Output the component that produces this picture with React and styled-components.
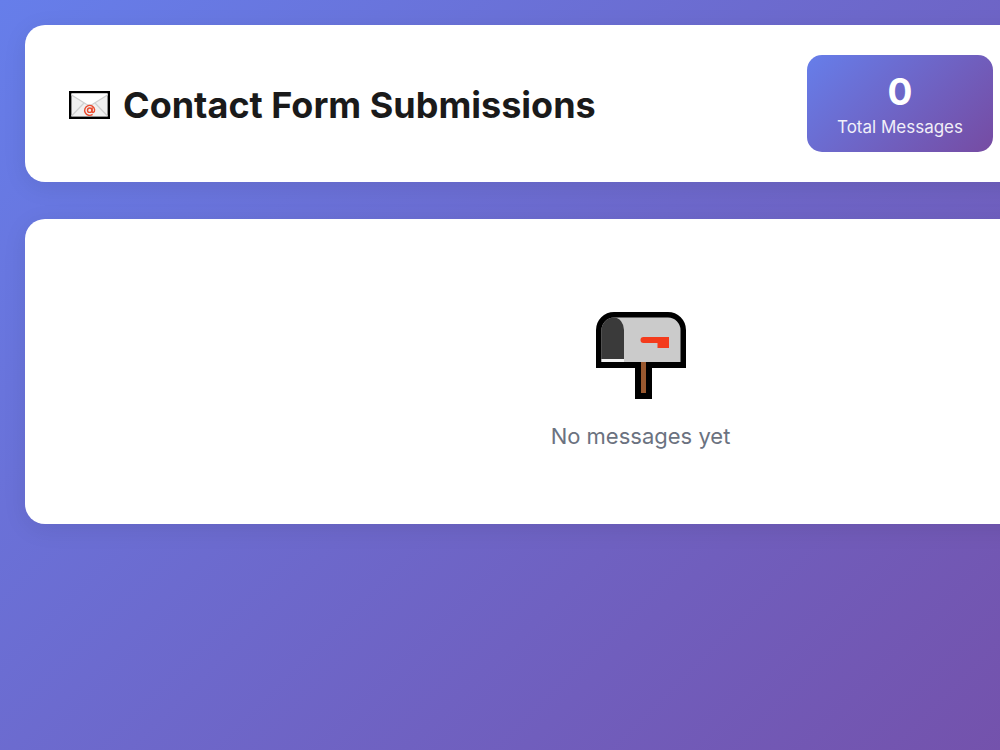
import React from 'react'
import styled, { createGlobalStyle } from 'styled-components';

function App() {
    return (
        <>
            <GlobalStyle />
            <Page>
                <Header>
                    <Title>
                        <EnvelopeIcon />
                        <span>Contact Form Submissions</span>
                    </Title>
                    <Stat>
                        <StatNumber>0</StatNumber>
                        <StatLabel>Total Messages</StatLabel>
                    </Stat>
                </Header>
                <EmptyState>
                    <MailboxIcon />
                    <p>No messages yet</p>
                </EmptyState>
            </Page>
        </>
    )
}

function EnvelopeIcon() {
    return (
        <svg width='41' height='28' viewBox='0 0 41 28' aria-hidden='true'>
            <rect x='1.2' y='1.2' width='38.6' height='25.6' fill='#f0f0f0' stroke='#000' strokeWidth='2.4' />
            <path d='M2.5 2.5H38.5V4L24 13Q20.5 15 17 13L2.5 4Z' fill='#fff' />
            <path d='M2.5 4L17 13Q20.5 15 24 13L38.5 4M2.5 25L15 12M38.5 25L26 12' fill='none' stroke='#cfcfcf' strokeWidth='1.2' />
            <circle cx='20.7' cy='19.2' r='2.2' fill='none' stroke='#ea4a2d' strokeWidth='1.4' />
            <path d='M23.1 16.6V20.2Q23.2 21.6 24.4 21.4Q25.8 20.8 25.6 18.6A5 5 0 1 0 23.6 23.4' fill='none' stroke='#ea4a2d' strokeWidth='1.4' />
        </svg>
    )
}

function MailboxIcon() {
    return (
        <svg width='90' height='87' viewBox='0 0 90 87' aria-hidden='true'>
            <path d='M0 56V18A18 18 0 0 1 18 0H72A18 18 0 0 1 90 18V56H56V87H39V56Z' fill='#000' />
            <path d='M5.5 50V18A12.5 12.5 0 0 1 18 5.5H72A12.5 12.5 0 0 1 84.5 18V50Z' fill='#cbcbcb' />
            <path d='M5.5 47H28V50H5.5Z' fill='#f4f4f4' />
            <path d='M5.5 47V18A12.5 12.5 0 0 1 18 5.5A10 12.5 0 0 1 28 18V47Z' fill='#3a3a3a' />
            <path d='M47.5 25H73V36H61.5V31H47.5A3 3 0 0 1 47.5 25Z' fill='#f43b1c' />
            <path d='M45 50H50V81H45Z' fill='#99582f' />
        </svg>
    )
}

export default App


const GlobalStyle = createGlobalStyle`
  * {
    box-sizing: border-box;
    margin: 0;
    padding: 0;
  }
  html {
    overflow: hidden;
  }
  body {
    font-family: Inter, "Liberation Sans", sans-serif;
  }
`;

const Page = styled.main`
    display: flex;
    flex-direction: column;
    gap: 37px;
    min-width: 1281px;
    min-height: 100vh;
    padding: 25px;
    background: linear-gradient(135deg, #667eea 0%, #764ba2 100%);
`;

const Card = styled.section`
    background-color: #ffffff;
    border-radius: 20px;
    box-shadow: 0 5px 25px rgba(0, 0, 0, 0.08);
`;

const Header = styled(Card).attrs({ as: 'header' })`
    display: flex;
    align-items: center;
    justify-content: space-between;
    padding: 30px 263px 30px 44px;
`;

const Title = styled.h1`
    display: flex;
    align-items: center;
    gap: 13px;
    padding-top: 3px;
    color: #1a1a1a;
    font-size: 36px;
    font-weight: 700;
    line-height: 45px;
`;

const Stat = styled.div`
    padding: 17px 30px 12px;
    border-radius: 15px;
    background: linear-gradient(135deg, #667eea 0%, #764ba2 100%);
    color: #ffffff;
    text-align: center;
`;

const StatNumber = styled.div`
    margin-bottom: 2px;
    font-size: 37px;
    font-weight: 700;
    line-height: 40px;
`;

const StatLabel = styled.div`
    font-size: 17px;
    line-height: 26px;
    opacity: 0.9;
`;

const EmptyState = styled(Card)`
    display: flex;
    flex-direction: column;
    align-items: center;
    gap: 22px;
    padding: 93px 44px 72px;
    p {
      color: #6b7280;
      font-size: 22px;
      line-height: 31px;
    }
`;
